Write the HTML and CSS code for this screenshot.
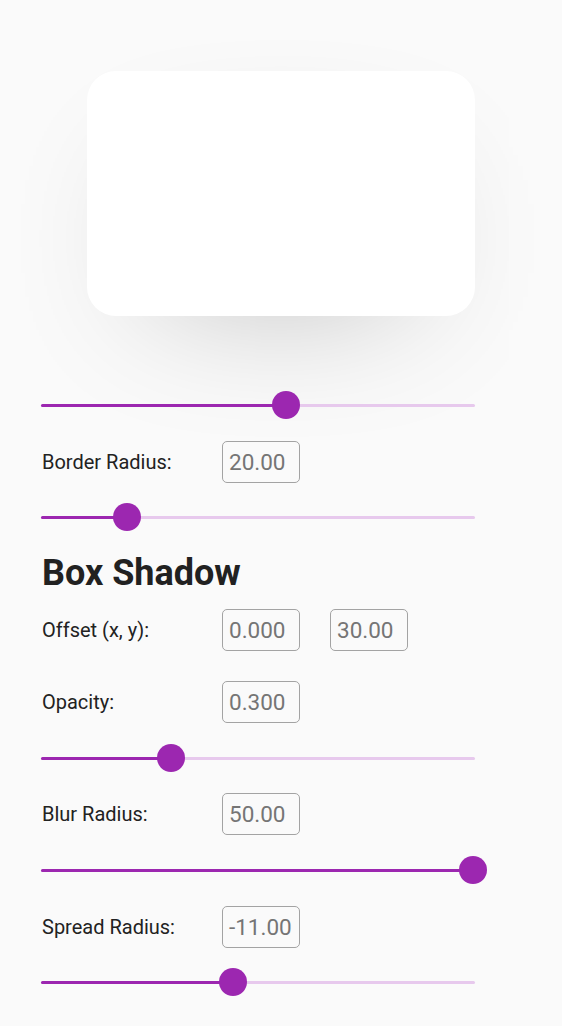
FILE: index.html
```html
<!DOCTYPE html>
<html>
<head>
<meta charset="utf-8">
<link rel="stylesheet" href="styles.css">
</head>
<body>
<div class="page">
  <div class="preview">
    <div class="card"></div>
  </div>

  <div class="controls">
    <div class="slider s1"><div class="track"><div class="active" style="width:245px"></div></div><div class="thumb" style="left:245px"></div></div>

    <div class="row r-br"><span class="label">Border Radius:</span><span class="field">20.00</span></div>

    <div class="slider s2"><div class="track"><div class="active" style="width:86px"></div></div><div class="thumb" style="left:86px"></div></div>

    <h2 class="heading">Box Shadow</h2>

    <div class="row r-off"><span class="label">Offset (x, y):</span><span class="field">0.000</span><span class="field second">30.00</span></div>

    <div class="row r-op"><span class="label">Opacity:</span><span class="field">0.300</span></div>

    <div class="slider s3"><div class="track"><div class="active" style="width:130px"></div></div><div class="thumb" style="left:130px"></div></div>

    <div class="row r-blur"><span class="label">Blur Radius:</span><span class="field">50.00</span></div>

    <div class="slider s4"><div class="track"><div class="active" style="width:434px"></div></div><div class="thumb" style="left:432px"></div></div>

    <div class="row r-spread"><span class="label">Spread Radius:</span><span class="field">-11.00</span></div>

    <div class="slider s5"><div class="track"><div class="active" style="width:192px"></div></div><div class="thumb" style="left:192px"></div></div>
  </div>
</div>
</body>
</html>
```

FILE: styles.css
```css
html, body {
  margin: 0;
  padding: 0;
  background: #fafafa;
}
body {
  font-family: Roboto, "Liberation Sans", sans-serif;
  color: #212121;
  width: 562px;
  height: 1026px;
  overflow: hidden;
}
.page {
  display: flex;
  flex-direction: column;
}
.preview {
  padding-top: 71px;
  display: flex;
  justify-content: center;
}
.card {
  width: 388px;
  height: 245px;
  background: #ffffff;
  border-radius: 29px;
  box-shadow: 0 45px 140px -70px rgba(0, 0, 0, 0.3);
}
.controls {
  display: flex;
  flex-direction: column;
  padding-left: 41px;
  width: 434px;
}
.slider {
  position: relative;
  height: 48px;
  display: flex;
  align-items: center;
}
.track {
  width: 434px;
  height: 3px;
  border-radius: 2px;
  background: #e7c9ed;
  display: flex;
}
.active {
  height: 3px;
  border-radius: 2px;
  background: #9c27b0;
}
.thumb {
  position: absolute;
  top: 10px;
  width: 28px;
  height: 28px;
  margin-left: -14px;
  border-radius: 50%;
  background: #9c27b0;
}
.row {
  display: flex;
  align-items: center;
  height: 42px;
}
.label {
  box-sizing: border-box;
  width: 181px;
  padding-left: 1px;
  font-size: 20px;
  color: #222222;
}
.field {
  box-sizing: border-box;
  width: 78px;
  height: 42px;
  border: 1.3px solid #a3a3a3;
  border-radius: 5px;
  padding-left: 6px;
  display: flex;
  align-items: center;
  font-size: 22.5px;
  color: #757575;
}
.field.second {
  margin-left: 30px;
}
.heading {
  margin: 12px 0 0 0;
  padding-left: 1px;
  font-size: 36px;
  line-height: 40px;
  font-weight: 700;
  color: #212121;
}
.s1 { margin-top: 65px; }
.r-br { margin-top: 12px; }
.s2 { margin-top: 10px; }
.r-off { margin-top: 16px; }
.r-op { margin-top: 30px; }
.s3 { margin-top: 11px; }
.r-blur { margin-top: 11px; }
.s4 { margin-top: 11px; }
.r-spread { margin-top: 12px; }
.s5 { margin-top: 10px; }
```
